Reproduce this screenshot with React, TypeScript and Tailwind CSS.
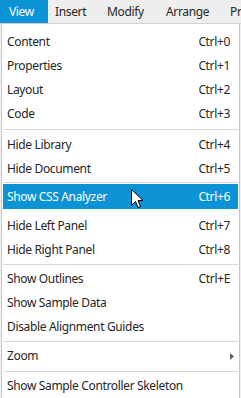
import React from "react";

type Row =
  | { kind: "item"; label: string; shortcut?: string; sub?: boolean; active?: boolean; h?: string }
  | { kind: "sep"; h: string; line?: boolean };

const rows: Row[] = [
  { kind: "item", label: "Content", shortcut: "Ctrl+0" },
  { kind: "item", label: "Properties", shortcut: "Ctrl+1" },
  { kind: "item", label: "Layout", shortcut: "Ctrl+2" },
  { kind: "item", label: "Code", shortcut: "Ctrl+3" },
  { kind: "sep", h: "h-[7px]", line: true },
  { kind: "item", label: "Hide Library", shortcut: "Ctrl+4" },
  { kind: "item", label: "Hide Document", shortcut: "Ctrl+5" },
  { kind: "sep", h: "h-[3px]", line: true },
  { kind: "item", label: "Show CSS Analyzer", shortcut: "Ctrl+6", active: true, h: "h-[25px]" },
  { kind: "sep", h: "h-[5px]", line: false },
  { kind: "item", label: "Hide Left Panel", shortcut: "Ctrl+7" },
  { kind: "item", label: "Hide Right Panel", shortcut: "Ctrl+8" },
  { kind: "sep", h: "h-[5px]", line: true },
  { kind: "item", label: "Show Outlines", shortcut: "Ctrl+E" },
  { kind: "item", label: "Show Sample Data" },
  { kind: "item", label: "Disable Alignment Guides" },
  { kind: "sep", h: "h-[5px]", line: true },
  { kind: "item", label: "Zoom", sub: true },
  { kind: "sep", h: "h-[6px]", line: true },
  { kind: "item", label: "Show Sample Controller Skeleton" },
];

export default function App() {
  return (
    <div className="relative w-[241px] h-[398px] overflow-hidden bg-[#f0f0f0] font-['Noto_Sans',sans-serif] text-[12px] tracking-[-0.35px] text-[#262626]">
      <div className="flex h-[24px] border-b border-[#d0d0d0] bg-[#eeeeee]">
        <div className="w-[48px] h-full pl-[9px] flex items-center bg-[#0b93d5] text-white">View</div>
        <div className="w-[52px] h-full pl-[7px] flex items-center">Insert</div>
        <div className="w-[59px] h-full pl-[7px] flex items-center">Modify</div>
        <div className="w-[64px] h-full pl-[7px] flex items-center">Arrange</div>
        <div className="flex-1 h-full pl-[7px] flex items-center whitespace-nowrap overflow-hidden">Pr</div>
      </div>
      <div className="ml-[1px] w-[239px] h-[380px] bg-white border-l border-r border-[#c8c8c8] pt-[6px] px-[1px]">
        {rows.map((r, i) =>
          r.kind === "sep" ? (
            <div key={i} className={r.h + " flex items-center"}>
              {r.line && <div className="h-px w-full bg-[#d7d7d7]" />}
            </div>
          ) : (
            <div
              key={i}
              className={
                (r.h ?? "h-[24px]") +
                " flex items-center justify-between pl-[4px] pr-[8px] " +
                (r.active ? "bg-[#0b93d5] text-white" : "")
              }
            >
              <span className="whitespace-nowrap">{r.label}</span>
              {r.shortcut && <span className="whitespace-nowrap">{r.shortcut}</span>}
              {r.sub && (
                <svg width="4" height="7" viewBox="0 0 4 7" className="-mr-[4px]">
                  <path d="M0 0 L4 3.5 L0 7 Z" fill="#606060" />
                </svg>
              )}
            </div>
          )
        )}
      </div>
      <svg
        className="absolute left-[131px] top-[189px]"
        width="13"
        height="20"
        viewBox="0 0 13 20"
      >
        <path
          d="M0.5 0.5 L0.5 16.5 L4.5 12.5 L7 18.5 L9.5 17.5 L7 11.5 L12 11.5 Z"
          fill="#ffffff"
          stroke="#000000"
          strokeWidth="1"
          strokeLinejoin="miter"
        />
      </svg>
    </div>
  );
}
